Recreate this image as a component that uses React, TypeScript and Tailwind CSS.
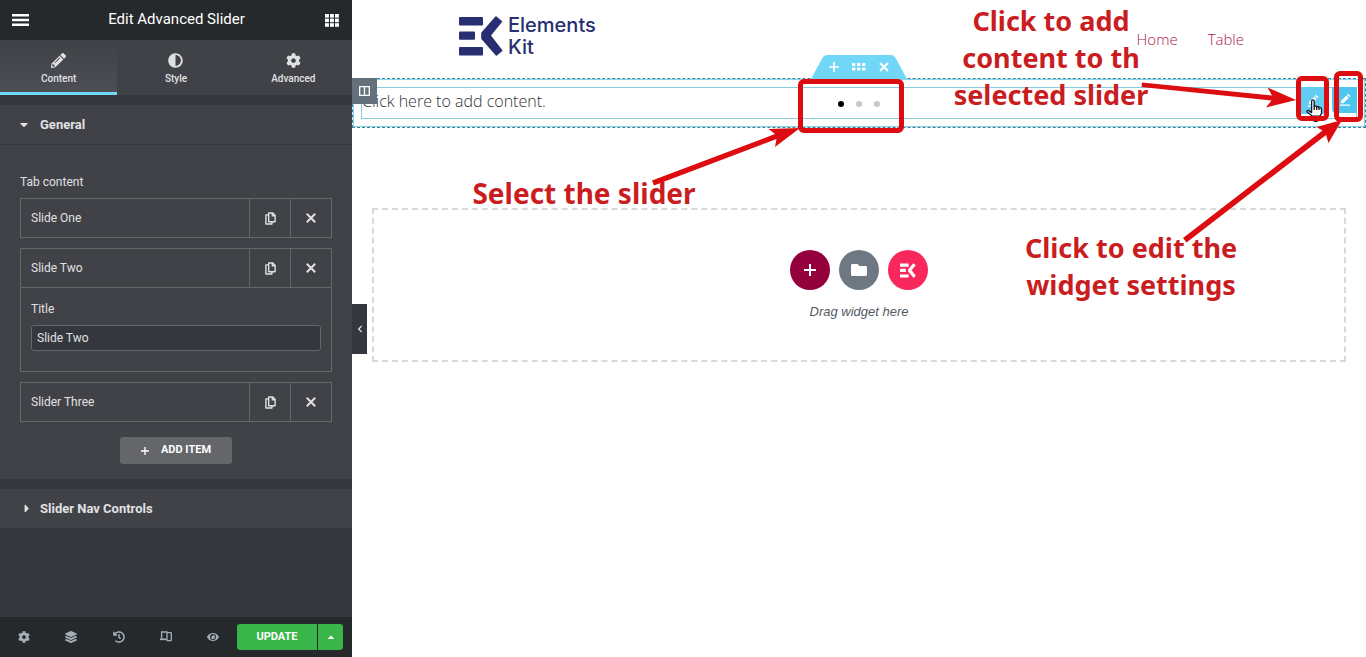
import { useState } from "react";
import {
  FaAdjust,
  FaCaretDown,
  FaCaretRight,
  FaCaretUp,
  FaChevronLeft,
  FaCog,
  FaEye,
  FaFolder,
  FaHistory,
  FaLayerGroup,
  FaPencilAlt,
} from "react-icons/fa";

const MenuIcon = () => (
  <svg viewBox="0 0 17 12" className="h-3 w-[17px]" fill="currentColor">
    <path d="M0 0h17v2.500H0zM0 4.750h17v2.500H0zM0 9.500h17V12H0z" />
  </svg>
);

const CloneIcon = () => (
  <svg viewBox="0 0 12 14" className="h-[13px] w-[11px]" fill="none" stroke="currentColor" strokeWidth="1.5">
    <path d="M4 1h4.500L11 3.500v7H4z" strokeLinejoin="round" />
    <path d="M8 1v3h3" />
    <path d="M4 3H1v10h6.600v-2.400" strokeLinejoin="round" />
  </svg>
);

const CloseIcon = () => (
  <svg viewBox="0 0 10 10" className="h-[10px] w-[10px]" stroke="currentColor" strokeWidth="2">
    <path d="M.8.8l8.4 8.4M9.2.8L.8 9.2" />
  </svg>
);

const PlusIcon = ({ className }: { className: string }) => (
  <svg viewBox="0 0 10 10" className={className} stroke="currentColor" strokeWidth="1.7">
    <path d="M5 0v10M0 5h10" />
  </svg>
);

const GridIcon = () => (
  <svg viewBox="0 0 14 13" className="h-[13px] w-[14px]" fill="currentColor">
    {[0, 5, 10].map((x) =>
      [0, 4.6, 9.2].map((y) => <rect key={`${x}-${y}`} x={x} y={y} width="3.9" height="3.6" />)
    )}
  </svg>
);

const DevicesIcon = () => (
  <svg viewBox="0 0 12 11" className="h-[11px] w-3" fill="none" stroke="currentColor" strokeWidth="1.3">
    <path d="M1.6 7.5V1h6" />
    <path d="M0 8.3h6.4" strokeWidth="1.7" />
    <rect x="7" y="1.6" width="4.3" height="8" rx=".6" />
  </svg>
);

const PenLineIcon = () => (
  <svg viewBox="0 0 12 12" className="h-3 w-3" fill="currentColor">
    <path d="M2 7L7.400 1.600l2.300 2.300L4.300 9.300H2zM8.100.9l.6-.6q.5-.5 1 0l1.300 1.300q.5.500 0 1l-.6.6zM1 10.500h10v1.200H1z" />
  </svg>
);

const ElementsMark = ({ className }: { className: string }) => (
  <svg viewBox="0 0 44 40" className={className} fill="currentColor">
    <rect x="0" y="1" width="24" height="8.4" rx="1" />
    <rect x="0" y="15.4" width="16" height="8.4" rx="1" />
    <rect x="0" y="31" width="24" height="8.4" rx="1" />
    <path
      d="M37 1L42.4 5.6 31 19.5 42.6 34.6 37.4 39 23 22.5V17z"
      stroke="currentColor"
      strokeWidth="1.6"
      strokeLinejoin="round"
    />
  </svg>
);

const HandCursor = () => (
  <svg viewBox="0 0 18 24" className="absolute left-[6px] top-[12px] h-6 w-[18px]" fill="#fff" stroke="#111827" strokeWidth="1.3">
    <path
      d="M5.6 13.6V2.2q0-1.4 1.3-1.4t1.3 1.4v5q2-.6 2.5.5 1.8-.6 2.3.8 2.2-.4 2.5 1.7v4.4l-1.6 2.6H6.4L1 12.8q-.3-1.6 1.4-1.4z"
      strokeLinejoin="round"
    />
    <path d="M8.2 7.2V11M10.7 8v3M13 8.8V11M4.500 19.500q5 6 11 0" fill="none" />
  </svg>
);

const tabs = [
  { label: "Content", icon: FaPencilAlt },
  { label: "Style", icon: FaAdjust },
  { label: "Advanced", icon: FaCog },
];

const slides = ["Slide One", "Slide Two", "Slider Three"];

const footerTools = [
  { label: "Settings", icon: FaCog },
  { label: "Navigator", icon: FaLayerGroup },
  { label: "History", icon: FaHistory },
  { label: "Responsive Mode", icon: DevicesIcon },
  { label: "Preview Changes", icon: FaEye },
];

const SlideItem = ({ title, open, onToggle }: { title: string; open: boolean; onToggle: () => void }) => {
  const [value, setValue] = useState(title);

  return (
    <div className="border border-[#64666a]">
      <div className="flex h-[38px]">
        <button onClick={onToggle} className="flex-1 px-[10px] text-left">
          {title}
        </button>
        <button aria-label={`Duplicate ${title}`} className="flex w-[41px] items-center justify-center border-l border-[#64666a]">
          <CloneIcon />
        </button>
        <button aria-label={`Remove ${title}`} className="flex w-[41px] items-center justify-center border-l border-[#64666a]">
          <CloseIcon />
        </button>
      </div>
      {open && (
        <div className="border-t border-[#64666a] px-[10px] pt-[13px] pb-5">
          <label htmlFor="slide-title" className="mb-2 block leading-4">
            Title
          </label>
          <input
            id="slide-title"
            value={value}
            onChange={(e) => setValue(e.target.value)}
            className="block h-[26px] w-full rounded-[3px] border border-[#64666a] bg-[#34373e] px-[5px] text-[#e0e1e3] outline-none"
          />
        </div>
      )}
    </div>
  );
};

const Sidebar = () => {
  const [active, setActive] = useState("Content");
  const [openSlide, setOpenSlide] = useState("Slide Two");

  return (
    <aside className="flex w-[352px] shrink-0 flex-col bg-[#34373e] font-[Roboto,sans-serif] text-xs text-[#e0e1e3]">
      <header className="flex h-10 items-center justify-between bg-[#26292c] px-3 text-white">
        <button aria-label="Menu">
          <MenuIcon />
        </button>
        <h1 className="text-[15px]">Edit Advanced Slider</h1>
        <button aria-label="Widgets" className="px-[1px]">
          <GridIcon />
        </button>
      </header>

      {/* Tabs */}
      <div className="grid h-[55px] grid-cols-3 bg-[#404247]">
        {tabs.map(({ label, icon: Icon }) => (
          <button
            key={label}
            onClick={() => setActive(label)}
            className={`flex flex-col items-center gap-1 border-b-3 pt-[13px] text-[10px] leading-[14px] font-medium ${
              active === label
                ? "border-[#71d7f7] bg-linear-to-b from-[#404247] to-[#4d4e56]"
                : "border-transparent"
            }`}
          >
            <Icon className="h-[15px] w-[15px] shrink-0" />
            {label}
          </button>
        ))}
      </div>

      {/* General */}
      <section className="mt-[10px] bg-[#404247]">
        <button className="flex h-10 w-full items-center border-b border-[#34373e] px-5 text-[13px] font-bold">
          <FaCaretDown className="mr-3 w-2" />
          General
        </button>
        <div className="px-5 pt-7 pb-[15px]">
          <p className="mb-[7px] leading-[18px]">Tab content</p>
          <div className="space-y-[10px]">
            {slides.map((title) => (
              <SlideItem
                key={title}
                title={title}
                open={openSlide === title}
                onToggle={() => setOpenSlide(openSlide === title ? "" : title)}
              />
            ))}
          </div>
          <button className="mx-auto mt-[15px] flex h-[27px] w-28 items-center justify-center gap-3 rounded-[3px] bg-[#64666a] text-[11px] font-bold text-white">
            <PlusIcon className="h-2 w-2" />
            ADD ITEM
          </button>
        </div>
      </section>

      <section className="mt-[10px] bg-[#404247]">
        <button className="flex h-[39px] w-full items-center px-5 text-[13px] font-bold">
          <FaCaretRight className="mr-[9px] ml-[3px] w-2" />
          Slider Nav Controls
        </button>
      </section>

      {/* Footer */}
      <footer className="mt-auto flex h-10 items-center bg-[#26292c] pr-[9px]">
        <div className="flex flex-1 text-[#a4afb7]">
          {footerTools.map(({ label, icon: Icon }) => (
            <button key={label} aria-label={label} className="flex flex-1 justify-center">
              <Icon className="h-3 w-3" />
            </button>
          ))}
        </div>
        <button className="h-[26px] w-20 rounded-l-[3px] bg-[#39b54a] text-[11px] font-bold text-white">UPDATE</button>
        <button aria-label="Save options" className="ml-px flex h-[26px] w-[25px] items-center justify-center rounded-r-[3px] bg-[#39b54a] text-white">
          <FaCaretUp className="h-[10px] w-[10px]" />
        </button>
      </footer>
    </aside>
  );
};

const SectionToolbar = () => (
  <div className="absolute -top-[24px] left-1/2 flex h-6 w-24 -translate-x-1/2 items-center justify-center gap-[13px] text-white">
    <svg viewBox="0 0 96 24" className="absolute inset-0 h-6 w-24" fill="#71d7f7">
      <path d="M0 24L11.500 2.800Q13 0 16 0H80Q83 0 84.500 2.800L96 24z" />
    </svg>
    <button aria-label="Add section" className="relative">
      <PlusIcon className="h-[10px] w-[10px]" />
    </button>
    <button aria-label="Edit section" className="relative">
      <svg viewBox="0 0 14 8" className="h-2 w-[14px]" fill="currentColor">
        {[0, 5, 10].map((x) => [0, 4.5].map((y) => <rect key={`${x}-${y}`} x={x} y={y} width="3.400" height="3" rx=".8" />))}
      </svg>
    </button>
    <button aria-label="Delete section" className="relative">
      <svg viewBox="0 0 10 10" className="h-[10px] w-[10px]" stroke="currentColor" strokeWidth="2">
        <path d="M1 1l8 8M9 1L1 9" />
      </svg>
    </button>
  </div>
);

const Section = () => (
  <section className="relative border border-dashed border-[#3f7f98]">
    <div className="border border-[#86d3ea] p-[7px]">
      <div className="flex h-8 items-center border border-[#8bcde0] pb-[5px] font-['Open_Sans',sans-serif] text-base leading-5 font-light text-[#333]">
        Click here to add content.
      </div>
    </div>
    <div className="absolute inset-x-0 top-[22px] flex justify-center gap-3">
      <button aria-label="Slide 1" className="h-[6px] w-[6px] rounded-full bg-black" />
      <button aria-label="Slide 2" className="h-[6px] w-[6px] rounded-full bg-[#c9c9c9]" />
      <button aria-label="Slide 3" className="h-[6px] w-[6px] rounded-full bg-[#c9c9c9]" />
    </div>
    <button aria-label="Edit column" className="absolute -top-px -left-px flex h-[26px] w-[25px] items-center justify-center bg-[#64717a] text-white">
      <svg viewBox="0 0 11 10" className="h-[10px] w-[11px]" fill="none" stroke="currentColor" strokeWidth="1.3">
        <path d="M.7.700h9.600v8.600H.7zM5.500.7v8.600" />
      </svg>
    </button>
    <SectionToolbar />
    <div className="absolute top-2 right-2 flex gap-[7px] text-white">
      <div className="relative">
        <button aria-label="Edit content" className="flex h-[27px] w-[25px] items-center justify-center bg-[#62cdf2]">
          <PenLineIcon />
        </button>
        <HandCursor />
      </div>
      <button aria-label="Edit widget" className="flex h-[26px] w-[25px] items-center justify-center rounded-bl bg-[#4fc6ee]">
        <PenLineIcon />
      </button>
    </div>
  </section>
);

const DropZone = () => (
  <div className="mx-5 mt-20 flex h-[154px] flex-col items-center border-2 border-dashed border-[#d5dadf] pt-10">
    <div className="flex gap-[9px] text-white">
      <button aria-label="Add new section" className="flex h-10 w-10 items-center justify-center rounded-full bg-[#93003c]">
        <PlusIcon className="h-3 w-3" />
      </button>
      <button aria-label="Add template" className="flex h-10 w-10 items-center justify-center rounded-full bg-[#6d7882]">
        <FaFolder className="h-4 w-4" />
      </button>
      <button aria-label="ElementsKit templates" className="flex h-10 w-10 items-center justify-center rounded-full bg-[#f8285c]">
        <ElementsMark className="h-[15px] w-4" />
      </button>
    </div>
    <p className="mt-3 font-['Liberation_Sans',Arial,sans-serif] text-[13px] text-[#54595f] italic">Drag widget here</p>
  </div>
);

/* Red callouts drawn on top of the canvas */
const Callouts = () => (
  <div className="pointer-events-none absolute inset-0 overflow-hidden text-center font-['Comic_Sans_MS','Noto_Sans',sans-serif] text-[27px] leading-[37px] font-bold whitespace-nowrap text-[#c91d1f]">
    <div className="absolute top-0 left-1/2 h-full">
      <p className="absolute top-[175px] left-[-388px] w-[226px] text-[28px]">Select the slider</p>
      <div className="absolute top-[79px] left-[-61px] h-[54px] w-[106px] rounded-md border-5 border-[#dc0c10]" />
      <svg viewBox="0 0 160 70" className="absolute top-[120px] left-[-210px] h-[70px] w-40" fill="#dc0c10">
        <path d="M3 60.500L126 14 119.500 9 151 8 126 27 127.500 19 5 65.500z" />
      </svg>
    </div>
    <div className="absolute top-0 right-0 h-full">
      <p className="absolute top-[2px] right-[216px] w-[198px]">
        Click to add
        <br />
        content to th
        <br />
        selected slider
      </p>
      <p className="absolute top-[229px] right-[125px] w-[220px]">
        Click to edit the
        <br />
        widget settings
      </p>
      <div className="absolute top-[76px] right-[37px] h-[45px] w-[33px] rounded-md border-5 border-[#dc0c10]" />
      <div className="absolute top-[71px] right-[3px] h-[51px] w-[29px] rounded-md border-5 border-[#dc0c10]" />
      <svg viewBox="0 0 266 180" className="absolute top-[70px] right-0 h-[180px] w-[266px]" fill="#dc0c10">
        <path d="M42 12.500L172 25.500 167.500 17.500 196 30 166 37.500 171.500 30.500 41.500 17z" />
        <path d="M83 168L222.500 60.500 216.500 57 242 50 228.500 73 226 65 86.500 172.500z" />
      </svg>
    </div>
  </div>
);

const Canvas = () => (
  <main className="relative min-w-0 flex-1 bg-white">
    <header className="flex h-[78px] items-center justify-between pr-[122px] pl-[107px]">
      <a href="#" className="flex items-center gap-[5px] pb-[6px] text-[#272e71]">
        <ElementsMark className="h-10 w-11" />
        <span className="font-[Inter,sans-serif] text-xl leading-[22px] font-medium">
          Elements
          <br />
          Kit
        </span>
      </a>
      <nav className="flex gap-[30px] font-['Open_Sans',sans-serif] text-[15px] font-light text-[#a8184f]">
        <a href="#home">Home</a>
        <a href="#table">Table</a>
      </nav>
    </header>
    <Section />
    <DropZone />
    <button aria-label="Hide panel" className="absolute top-[304px] left-0 flex h-[50px] w-[15px] items-center justify-center bg-[#34373e] text-[#e0e1e3]">
      <FaChevronLeft className="h-2 w-2" />
    </button>
    <Callouts />
  </main>
);

const App = () => (
  <div className="flex min-h-screen bg-white">
    <Sidebar />
    <Canvas />
  </div>
);

export default App;
